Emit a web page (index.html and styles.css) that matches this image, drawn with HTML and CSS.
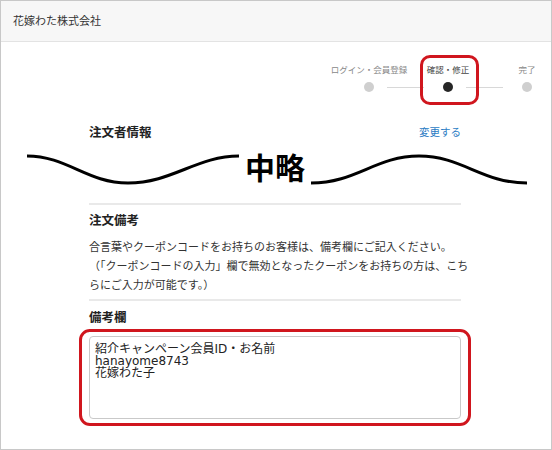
FILE: index.html
```html
<!DOCTYPE html>
<html lang="ja">

<head>
    <meta charset="UTF-8">
    <meta name="viewport" content="width=device-width, initial-scale=1.0">
    <link rel="stylesheet" href="styles.css">
    <title>注文確認・修正</title>
</head>

<body>
    <div class="frame">
        <div class="app-header">
            <span class="shop-name">花嫁わた株式会社</span>
        </div>

        <div class="steps">
            <div class="step">
                <span class="step-label">ログイン・会員登録</span>
                <span class="step-dot"></span>
            </div>
            <div class="step current">
                <span class="step-label">確認・修正</span>
                <span class="step-dot"></span>
            </div>
            <div class="step">
                <span class="step-label">完了</span>
                <span class="step-dot"></span>
            </div>
        </div>

        <div class="section-row">
            <h2 class="section-title">注文者情報</h2>
            <a href="#" class="edit-link">変更する</a>
        </div>

        <div class="omission">
            <svg class="wave" width="212" height="34" viewBox="0 0 212 34">
                <path d="M0 4 C40 4, 60 31, 101 31 C145 31, 170 4, 212 4" fill="none" stroke="#000" stroke-width="3" />
            </svg>
            <span class="omission-text">中略</span>
            <svg class="wave" width="216" height="34" viewBox="0 0 216 34">
                <path d="M0 31 C45 31, 65 4, 108 4 C151 4, 171 31, 216 31" fill="none" stroke="#000" stroke-width="3" />
            </svg>
        </div>

        <div class="content">
            <hr class="divider">
            <h2 class="section-title">注文備考</h2>
            <p class="note">合言葉やクーポンコードをお持ちのお客様は、備考欄にご記入ください。<br>（「クーポンコードの入力」欄で無効となったクーポンをお持ちの方は、こちらにご入力が可能です。）</p>
            <hr class="divider">
            <h2 class="section-title field-title">備考欄</h2>
            <div class="highlight">
                <textarea class="remarks">紹介キャンペーン会員ID・お名前
hanayome8743
花嫁わた子</textarea>
            </div>
        </div>
    </div>
</body>

</html>
```

FILE: styles.css
```css
* {
    margin: 0;
    padding: 0;
    box-sizing: border-box;
}

body {
    font-family: "Noto Sans CJK JP", sans-serif;
    background-color: #ffffff;
    color: #333333;
}

.frame {
    width: 552px;
    height: 450px;
    border: 1px solid #c8c8c8;
    overflow: hidden;
}

/* Header */
.app-header {
    display: flex;
    align-items: center;
    height: 41px;
    padding: 0 12px 3px;
    background-color: #f7f7f7;
    border-bottom: 1px solid #e3e3e3;
}

.shop-name {
    font-size: 11px;
    color: #333333;
}

/* Steps */
.steps {
    display: grid;
    grid-template-columns: repeat(3, 40px);
    column-gap: 39px;
    justify-content: end;
    padding-right: 4px;
    margin-top: 20px;
}

.step {
    display: flex;
    flex-direction: column;
    align-items: center;
    gap: 6px;
    position: relative;
}

.step-label {
    font-size: 8.5px;
    line-height: 14px;
    color: #888888;
    white-space: nowrap;
}

.step-dot {
    width: 10px;
    height: 10px;
    border-radius: 50%;
    background-color: #cfcfcf;
    position: relative;
}

.step:not(:last-child) .step-dot::after {
    content: "";
    position: absolute;
    left: 23px;
    top: 4.5px;
    width: 37px;
    height: 1px;
    background-color: #d8d8d8;
}

.step.current .step-label {
    color: #444444;
}

.step.current .step-dot {
    background-color: #262626;
}

.step.current::after {
    content: "";
    position: absolute;
    top: -7px;
    bottom: -13px;
    left: -8px;
    right: -11px;
    border: 3px solid #d0161e;
    border-radius: 10px;
}

/* Sections */
.section-row {
    display: flex;
    justify-content: space-between;
    align-items: center;
    width: 372px;
    margin: 31px 0 0 88px;
}

.section-title {
    font-size: 12.5px;
    font-weight: 700;
    line-height: 18px;
    color: #222222;
}

.edit-link {
    font-size: 10.5px;
    line-height: 18px;
    color: #2b7cc4;
    text-decoration: none;
}

/* Omission mark */
.omission {
    display: flex;
    align-items: center;
    gap: 6px;
    height: 34px;
    margin-top: 11px;
    padding-left: 26px;
}

.wave {
    flex-shrink: 0;
}

.omission-text {
    font-size: 30px;
    font-weight: 700;
    line-height: 30px;
    color: #000000;
    margin-bottom: 6px;
}

/* Content */
.content {
    width: 372px;
    margin-left: 88px;
}

.divider {
    border: none;
    height: 2px;
    background-color: #e9e9e9;
    margin-top: 17px;
}

.content .section-title {
    margin-top: 6px;
}

.note {
    font-size: 11px;
    line-height: 19px;
    color: #333333;
    margin: 8px -8px 0 0;
}

.note + .divider {
    margin-top: 5px;
}

.content .field-title {
    margin-top: 7px;
}

.highlight {
    margin: 3px -10px 0;
    padding: 4px 7px;
    border: 3px solid #d0161e;
    border-radius: 11px;
}

.remarks {
    display: block;
    width: 100%;
    height: 83px;
    padding: 6px 5px;
    border: 1px solid #c9c9c9;
    border-radius: 4px;
    font-family: "DejaVu Sans", "Noto Sans CJK JP", sans-serif;
    font-size: 12px;
    line-height: 12px;
    color: #222222;
    resize: none;
    outline: none;
    overflow: hidden;
}
```
